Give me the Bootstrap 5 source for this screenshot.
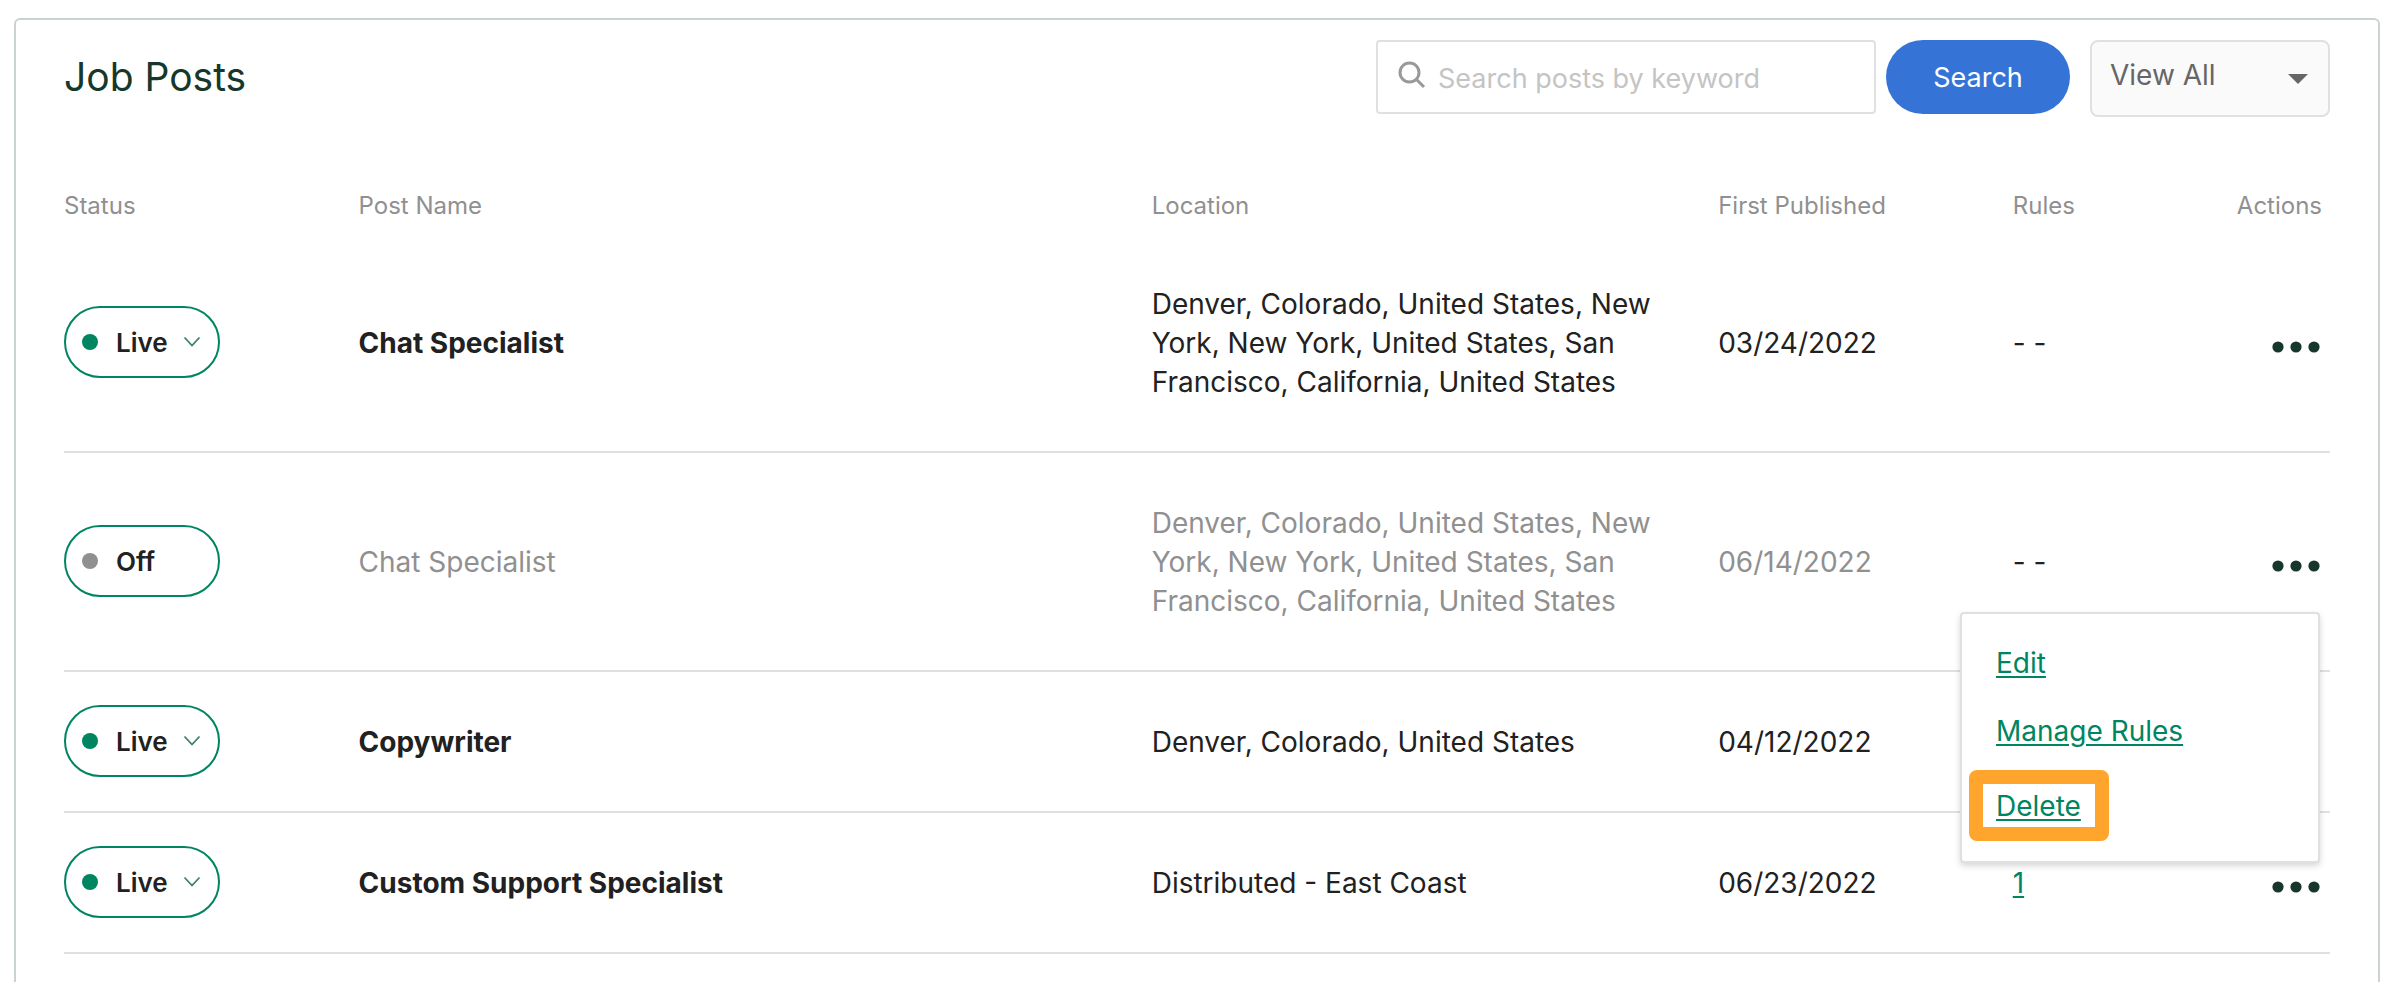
<!DOCTYPE html>
<html lang="en">
<head>
<meta charset="utf-8">
<meta name="viewport" content="width=device-width, initial-scale=1">
<title>Job Posts</title>
<link href="https://cdn.jsdelivr.net/npm/bootstrap@5.3.0/dist/css/bootstrap.min.css" rel="stylesheet">
<style>
  :root { --green: #008561; --deep-green: #17372b; --ink: #212121; --muted-ink: #909090; --line: #e0e0e0; }
  body { font-family: Inter, "Liberation Sans", Arial, sans-serif; font-size: 28px; line-height: 39px; color: var(--ink); background: #fff; }
  .posts-panel { margin: 18px 12px 0 14px; padding: 20px 48px 0; min-height: calc(100vh - 18px); border: 2px solid #cbd3d1; border-bottom: 0; border-radius: 6px 6px 0 0; }
  .panel-title { font-size: 39px; line-height: 74px; font-weight: 400; color: var(--deep-green); }

  .search-form { gap: 10px; }
  .search-box { width: 500px; height: 74px; padding-left: 20px; border: 2px solid var(--line); border-radius: 4px; }
  .search-box svg { flex: none; margin-bottom: 4px; }
  .search-box .form-control { padding: 2px 14px 0 12px; font-size: 27px; line-height: 39px; border: 0; background: transparent; }
  .search-box .form-control::placeholder { color: #c4c4c4; opacity: 1; }
  .search-btn { width: 184px; height: 74px; padding: 2px 0 0; border: 0; border-radius: 37px; font-size: 27px; color: #fff; background: #3574d6; }
  .search-btn:hover { color: #fff; background: #2b64bd; }
  .view-select { width: 240px; height: 77px; margin-left: 10px; padding: 0 60px 6px 18px; font-size: 28px; line-height: 39px; color: #666; border: 2px solid var(--line); border-radius: 8px;
    background: #fafafa url("data:image/svg+xml,%3csvg xmlns='http://www.w3.org/2000/svg' viewBox='0 0 20 10'%3e%3cpath d='M0 0h20L10 10z' fill='%23666'/%3e%3c/svg%3e") no-repeat right 20px center / 20px 10px; }

  .posts-table { table-layout: fixed; width: 100%; }
  .col-status, .col-date { width: 13%; }
  .col-name { width: 35%; }
  .col-place { width: 25%; }
  .col-rules { width: 5%; }
  .col-actions { width: 9%; }
  .posts-table th, .posts-table td { padding: 51px 0 49px; vertical-align: middle; }
  .posts-table thead th { padding: 74px 0 13px; font-size: 24px; line-height: 30px; font-weight: 400; color: var(--muted-ink); }
  .posts-table tbody tr { border-bottom: 2px solid var(--line); }
  .posts-table .place-cell { padding-right: 50px; }
  .posts-table .actions-cell { padding-right: 10px; text-align: right; }
  .posts-table .pill-cell { padding-top: 0; padding-bottom: 2px; }
  .posts-table .is-off { color: var(--muted-ink); }

  .status-pill { width: 156px; height: 72px; padding: 0 17px 0 16px; border: 2px solid var(--green); border-radius: 36px; background: #fff; font-size: 26px; font-weight: 600; color: var(--ink); }
  .status-dot { width: 16px; height: 16px; margin-right: 18px; border-radius: 50%; background: var(--green); }
  .dot-off { background: var(--muted-ink); }
  .pill-label { padding-top: 2px; }

  .dots-btn { display: block; margin-left: auto; padding: 6px 0 0; border: 0; background: none; line-height: 0; }
  .green-link { color: var(--green); text-decoration: underline; text-decoration-thickness: 2px; text-underline-offset: 3px; }
  .green-link:hover { color: #00664a; }
  .row-menu { top: 58px; right: 0; width: 360px; height: 251px; padding: 30px 34px 0; font-size: 28px; color: var(--ink); border: 2px solid var(--line); border-radius: 4px; box-shadow: 0 3px 6px rgba(0, 0, 0, .16); }
  .row-menu li { margin-bottom: 29px; }
  .delete-mark { display: inline-block; margin: -10px 0 0 -27px; padding: 3px 14px 1px 13px; border: 14px solid #ffa52e; border-radius: 8px; }
</style>
</head>
<body>
<svg class="d-none" aria-hidden="true">
  <symbol id="dots" viewBox="0 0 48 12"><circle cx="6" cy="6" r="5.600"/><circle cx="24" cy="6" r="5.600"/><circle cx="42" cy="6" r="5.600"/></symbol>
  <symbol id="chevron" viewBox="0 0 18 12"><path d="M1.500 1.500L9 9.500l7.500-8" fill="none" stroke="#3f8069" stroke-width="1.800"/></symbol>
</svg>
<main class="posts-panel">
  <header class="d-flex align-items-start justify-content-between">
    <h1 class="panel-title mb-0">Job Posts</h1>
    <form class="search-form d-flex align-items-start" role="search">
      <div class="search-box d-flex align-items-center">
        <svg width="28" height="28" viewBox="0 0 28 28" fill="none" stroke="#999" stroke-width="3" aria-hidden="true"><circle cx="11.500" cy="11.500" r="9.500"/><path d="M18.500 18.500l7.500 7.500"/></svg>
        <input class="form-control shadow-none" type="text" aria-label="Search posts by keyword" placeholder="Search posts by keyword">
      </div>
      <button class="btn search-btn" type="button">Search</button>
      <select class="form-select view-select" aria-label="View"><option>View All</option></select>
    </form>
  </header>

  <table class="posts-table">
    <colgroup><col class="col-status"><col class="col-name"><col class="col-place"><col class="col-date"><col class="col-rules"><col class="col-actions"></colgroup>
    <thead>
      <tr>
        <th scope="col">Status</th>
        <th scope="col">Post Name</th>
        <th scope="col">Location</th>
        <th scope="col">First Published</th>
        <th scope="col">Rules</th>
        <th scope="col" class="text-end"><div class="me-2">Actions</div></th>
      </tr>
    </thead>
    <tbody>
      <tr>
        <td class="pill-cell"><button type="button" class="status-pill d-flex align-items-center"><span class="status-dot"></span><span class="pill-label">Live</span><svg class="ms-auto" width="18" height="12" aria-hidden="true"><use href="#chevron"/></svg></button></td>
        <td class="fw-bold">Chat Specialist</td>
        <td class="place-cell">Denver, Colorado, United States, New York, New York, United States, San Francisco, California, United States</td>
        <td>03/24/2022</td>
        <td>- -</td>
        <td class="actions-cell"><button type="button" class="dots-btn" aria-label="Actions"><svg width="48" height="12" fill="#17372b"><use href="#dots"/></svg></button></td>
      </tr>
      <tr>
        <td class="pill-cell"><button type="button" class="status-pill d-flex align-items-center"><span class="status-dot dot-off"></span><span class="pill-label">Off</span></button></td>
        <td class="is-off">Chat Specialist</td>
        <td class="place-cell is-off">Denver, Colorado, United States, New York, New York, United States, San Francisco, California, United States</td>
        <td class="is-off">06/14/2022</td>
        <td>- -</td>
        <td class="actions-cell">
          <div class="dropdown">
            <button type="button" class="dots-btn" aria-label="Actions" aria-expanded="true"><svg width="48" height="12" fill="#17372b"><use href="#dots"/></svg></button>
            <ul class="dropdown-menu show row-menu">
              <li><a class="green-link" href="#edit">Edit</a></li>
              <li><a class="green-link" href="#rules">Manage Rules</a></li>
              <li><span class="delete-mark"><a class="green-link" href="#delete">Delete</a></span></li>
            </ul>
          </div>
        </td>
      </tr>
      <tr>
        <td class="pill-cell"><button type="button" class="status-pill d-flex align-items-center"><span class="status-dot"></span><span class="pill-label">Live</span><svg class="ms-auto" width="18" height="12" aria-hidden="true"><use href="#chevron"/></svg></button></td>
        <td class="fw-bold">Copywriter</td>
        <td class="place-cell">Denver, Colorado, United States</td>
        <td>04/12/2022</td>
        <td></td>
        <td class="actions-cell"></td>
      </tr>
      <tr>
        <td class="pill-cell"><button type="button" class="status-pill d-flex align-items-center"><span class="status-dot"></span><span class="pill-label">Live</span><svg class="ms-auto" width="18" height="12" aria-hidden="true"><use href="#chevron"/></svg></button></td>
        <td class="fw-bold">Custom Support Specialist</td>
        <td class="place-cell">Distributed - East Coast</td>
        <td>06/23/2022</td>
        <td><a class="green-link" href="#rule">1</a></td>
        <td class="actions-cell"><button type="button" class="dots-btn" aria-label="Actions"><svg width="48" height="12" fill="#17372b"><use href="#dots"/></svg></button></td>
      </tr>
    </tbody>
  </table>
</main>
<script src="https://cdn.jsdelivr.net/npm/bootstrap@5.3.0/dist/js/bootstrap.bundle.min.js"></script>
</body>
</html>
